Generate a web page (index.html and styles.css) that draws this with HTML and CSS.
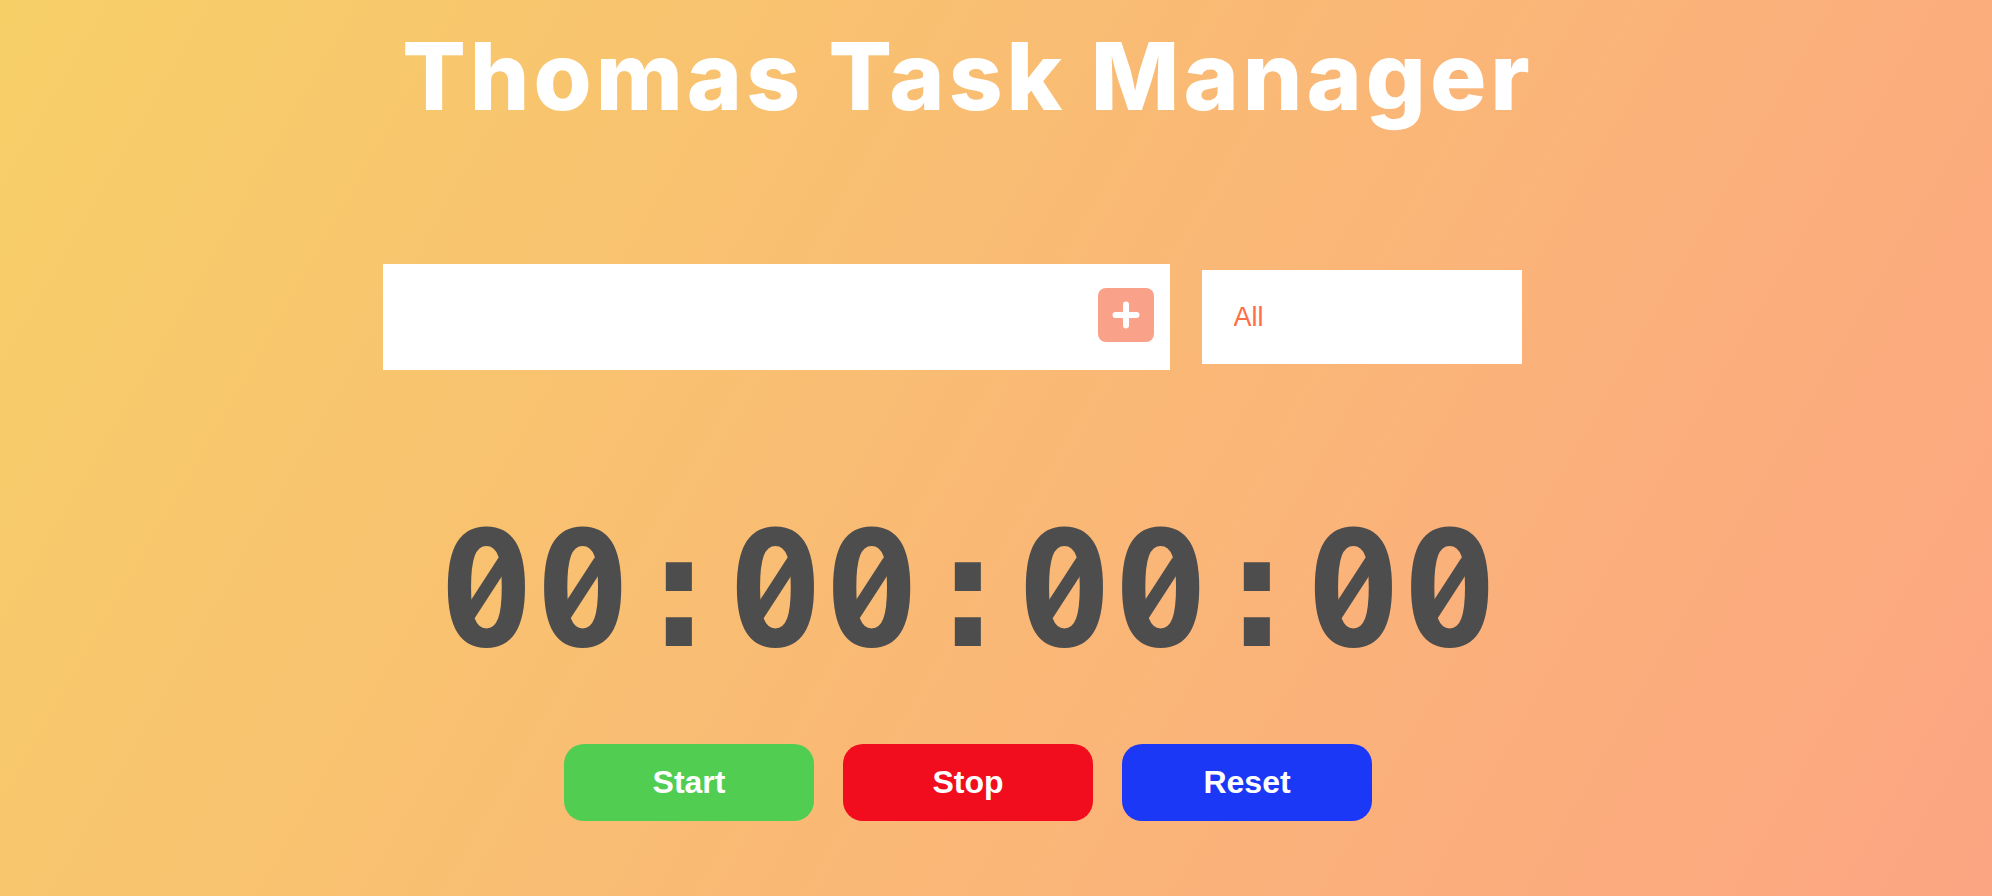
FILE: index.html
```html
<!DOCTYPE html>
<html lang="en">
<head>
<meta charset="utf-8">
<title>Thomas Task Manager</title>
<link rel="stylesheet" href="styles.css">
</head>
<body>
<main class="app">
  <header class="header">
    <h1 class="title">Thomas Task Manager</h1>
  </header>
  <form class="todo-form">
    <div class="todo-input-wrap">
      <input class="todo-input" type="text" aria-label="New task">
      <button class="todo-add" type="button" aria-label="Add task">
        <svg viewBox="0 0 28 28" width="28" height="28"><path d="M14 3.5V24.5M3.5 14H24.5" stroke="#fff" stroke-width="6" stroke-linecap="round" fill="none"/></svg>
      </button>
    </div>
    <div class="select-wrap">
      <select class="filter" aria-label="Filter">
        <option>All</option>
        <option>Completed</option>
        <option>Uncompleted</option>
      </select>
    </div>
  </form>
  <div class="timer"><span class="digit">0</span><span class="digit">0</span><span class="sep">:</span><span class="digit">0</span><span class="digit">0</span><span class="sep">:</span><span class="digit">0</span><span class="digit">0</span><span class="sep">:</span><span class="digit">0</span><span class="digit">0</span></div>
  <div class="controls">
    <button class="btn btn-start" type="button">Start</button>
    <button class="btn btn-stop" type="button">Stop</button>
    <button class="btn btn-reset" type="button">Reset</button>
  </div>
</main>
</body>
</html>
```
FILE: styles.css
```css
* {
  box-sizing: border-box;
}

html, body {
  margin: 0;
  padding: 0;
}

body {
  min-height: 100vh;
  background-image: linear-gradient(120deg, #f6d365 -9%, #fda085 111%);
  background-attachment: fixed;
  font-family: "Liberation Sans", Arial, sans-serif;
  color: #fff;
  overflow: hidden;
}

.app {
  min-height: 100vh;
  padding-right: 56px;
  display: flex;
  flex-direction: column;
  align-items: center;
}

.header {
  padding-top: 29px;
}

.title {
  margin: 0;
  font-family: Inter, "Noto Sans", sans-serif;
  font-weight: 800;
  font-size: 94px;
  line-height: 94px;
  letter-spacing: 4px;
  color: #fff;
  white-space: nowrap;
}

.todo-form {
  margin-top: 141px;
  display: flex;
  align-items: center;
  justify-content: center;
}

.todo-input-wrap {
  width: 787px;
  height: 106px;
  background: #fff;
  display: flex;
  align-items: center;
  padding-right: 16px;
}

.todo-input {
  flex: 1;
  height: 100%;
  border: none;
  outline: none;
  background: transparent;
  font-size: 32px;
  padding: 0 16px;
  font-family: "Liberation Sans", Arial, sans-serif;
}

.todo-add {
  width: 56px;
  height: 54px;
  margin-top: -5px;
  border: none;
  border-radius: 8px;
  background: #f9a189;
  display: flex;
  align-items: center;
  justify-content: center;
  padding: 0;
  cursor: pointer;
}

.todo-add svg {
  display: block;
}

.select-wrap {
  margin: 0 32px;
}

.filter {
  -webkit-appearance: none;
  appearance: none;
  width: 320px;
  height: 94px;
  border: none;
  outline: none;
  border-radius: 0;
  background: #fff;
  color: #ff6f47;
  font-family: "Liberation Sans", Arial, sans-serif;
  font-size: 27px;
  padding: 0 32px;
  cursor: pointer;
}

.timer {
  margin-top: 141px;
  display: flex;
  font-family: "DejaVu Sans Mono", monospace;
  font-weight: bold;
  font-size: 160px;
  line-height: 160px;
  color: #4d4d4d;
  white-space: nowrap;
}

.digit,
.sep {
  display: inline-block;
  height: 160px;
}

/* Menlo-style slashed zero: hide the dot, draw the slash */
.digit {
  position: relative;
}

.digit::before {
  content: "";
  position: absolute;
  left: calc(50% - 13px);
  top: 58.6px;
  width: 26px;
  height: 36px;
  border-radius: 50%;
  background-image: linear-gradient(120deg, #f6d365 -9%, #fda085 111%);
  background-attachment: fixed;
}

.digit::after {
  content: "";
  position: absolute;
  left: calc(50% - 6.25px);
  top: 44.6px;
  width: 12.5px;
  height: 64px;
  background: #4d4d4d;
  transform: rotate(33deg);
}

.controls {
  margin-top: 73px;
  display: flex;
  gap: 29px;
}

.btn {
  width: 250px;
  height: 77px;
  border: none;
  border-radius: 20px;
  color: #fff;
  font-family: "Liberation Sans", Arial, sans-serif;
  font-weight: bold;
  font-size: 32px;
  cursor: pointer;
  padding: 0;
}

.btn-start {
  background: #51cd52;
}

.btn-stop {
  background: #f20d1e;
}

.btn-reset {
  background: #1b38f7;
}
```
